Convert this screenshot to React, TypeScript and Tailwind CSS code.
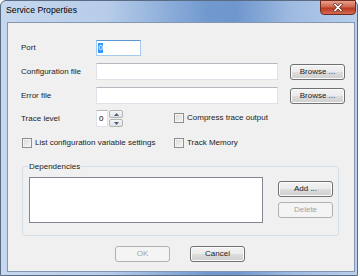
import React from 'react';

const btn =
  'flex items-center justify-center h-[16px] w-[55px] rounded-[3px] border border-[#707070] bg-[linear-gradient(#f2f2f2,#ebebeb_50%,#dddddd_50%,#cfcfcf)] shadow-[inset_0_0_0_1px_#fcfcfc] text-[8px] text-[#1a1a1a] leading-none';
const btnDisabled =
  'flex items-center justify-center h-[16px] w-[55px] rounded-[3px] border border-[#adb2b5] bg-[#f4f4f4] text-[8px] text-[#a3a3a3] leading-none';
const textBox = 'h-[17px] bg-white border border-[#dfe3e9] border-t-[#b5b8bf]';

function CheckBox() {
  return (
    <div className="w-[10px] h-[10px] border border-[#8e8f8f] bg-[linear-gradient(135deg,#d8d8d8,#f7f7f7)] shadow-[inset_0_0_0_1px_#f4f4f4]" />
  );
}

function Label({ children }: { children: React.ReactNode }) {
  return <div className="w-[75px] shrink-0 text-[8px] leading-none text-[#222]">{children}</div>;
}

export default function App() {
  return (
    <div className="w-[360px] h-[276px] bg-white font-['Liberation_Sans',Arial,sans-serif]">
      <div className="w-[358px] h-[276px] flex flex-col rounded-t-[6px] border border-[#5a6b84] bg-[linear-gradient(90deg,#c6d8ef_0%,#b6cce9_30%,#7199cf_58%,#6f97cd_66%,#9fbbe2_82%,#b9cfec_100%)]">
        {/* title bar */}
        <div className="h-[21px] flex items-start shrink-0">
          <div className="pl-[5px] pt-[5px] text-[8.7px] leading-none text-black">Service Properties</div>
          <div className="ml-auto mr-[1px] mt-[-1px] w-[36px] h-[15px] rounded-b-[4px] border border-[#6e2b1f] bg-[linear-gradient(#e9a08e,#d0654d_45%,#b93a22_55%,#d46a4f)] flex items-center justify-center">
            <svg width="10" height="9" viewBox="0 0 10 9">
              <path d="M2 1.5 L8 7.5 M8 1.5 L2 7.5" stroke="#5a2419" strokeWidth="3" strokeLinecap="square" />
              <path d="M2 1.5 L8 7.5 M8 1.5 L2 7.5" stroke="#ffffff" strokeWidth="1.6" strokeLinecap="square" />
            </svg>
          </div>
        </div>

        {/* client area */}
        <div className="flex-1 ml-[6px] mr-[2px] mb-[3px] border border-[#8496b0] bg-[#f0f0f0] pt-[17px] pl-[13px] flex flex-col">
          {/* Port */}
          <div className="flex items-center h-[16px]">
            <Label>Port</Label>
            <div className="h-[16px] w-[45px] bg-white border border-[#a7cbee] border-t-[#5e98d3] flex items-center pl-[1px]">
              <span className="bg-[#3399ff] text-white text-[8px] leading-[10px] px-[0.5px]">0</span>
            </div>
          </div>

          {/* Configuration file */}
          <div className="flex items-center h-[17px] mt-[7px]">
            <Label>Configuration file</Label>
            <div className={`${textBox} w-[182px]`} />
            <div className={`${btn} ml-[12px]`}>Browse ...</div>
          </div>

          {/* Error file */}
          <div className="flex items-center h-[17px] mt-[7px]">
            <Label>Error file</Label>
            <div className={`${textBox} w-[182px]`} />
            <div className={`${btn} ml-[12px]`}>Browse ...</div>
          </div>

          {/* Trace level */}
          <div className="flex items-center h-[17px] mt-[6px]">
            <Label>Trace level</Label>
            <div className={`${textBox} w-[12px] text-[8px] leading-none flex items-center pl-[2px]`}>0</div>
            <div className="w-[14px] h-[17px] flex flex-col gap-[1px] ml-[1px]">
              <div className="flex-1 rounded-[2px] border border-[#b4b4b4] bg-[linear-gradient(#f6f6f6,#e2e2e2)] flex items-center justify-center">
                <svg width="5" height="3" viewBox="0 0 5 3"><path d="M0 3 L2.5 0 L5 3 Z" fill="#4a5f85" /></svg>
              </div>
              <div className="flex-1 rounded-[2px] border border-[#b4b4b4] bg-[linear-gradient(#f6f6f6,#e2e2e2)] flex items-center justify-center">
                <svg width="5" height="3" viewBox="0 0 5 3"><path d="M0 0 L2.5 3 L5 0 Z" fill="#4a5f85" /></svg>
              </div>
            </div>
            <div className="ml-[51px] flex items-center gap-[3px] self-start mt-[3px]">
              <CheckBox />
              <span className="text-[8px] leading-none text-[#222]">Compress trace output</span>
            </div>
          </div>

          {/* checkbox row */}
          <div className="flex items-center h-[12px] mt-[10px]">
            <div className="w-[152px] flex items-center gap-[3px] ml-[1px]">
              <CheckBox />
              <span className="text-[8px] leading-none text-[#222]">List configuration variable settings</span>
            </div>
            <div className="flex items-center gap-[3px]">
              <CheckBox />
              <span className="text-[8px] leading-none text-[#222]">Track Memory</span>
            </div>
          </div>

          {/* Dependencies group */}
          <div className="relative mt-[17px] ml-[1px] w-[317px] h-[70px] rounded-[3px] border border-[#d5dfe5] pt-[10px] pl-[6px] flex items-start">
            <span className="absolute left-[5px] top-[-5px] bg-[#f0f0f0] px-[1px] text-[8px] leading-[10px] text-[#222]">Dependencies</span>
            <div className="w-[234px] h-[46px] bg-white border border-[#828790]" />
            <div className="ml-[15px] mt-[4px] flex flex-col gap-[5px]">
              <div className={btn}>Add ...</div>
              <div className={btnDisabled}>Delete</div>
            </div>
          </div>

          {/* OK / Cancel */}
          <div className="flex gap-[20px] mt-[10px] ml-[94px]">
            <div className={btnDisabled}>OK</div>
            <div className={btn}>Cancel</div>
          </div>
        </div>
      </div>
    </div>
  );
}
